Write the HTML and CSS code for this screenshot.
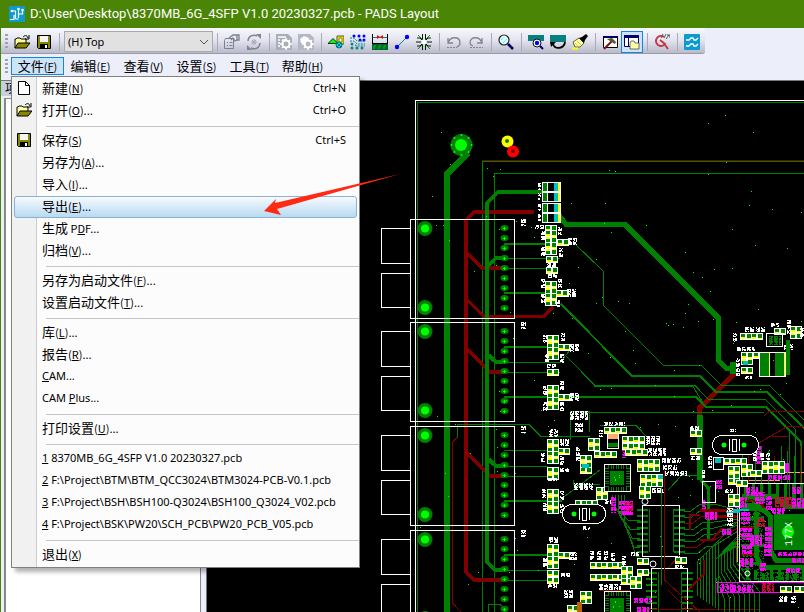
FILE: index.html
```html
<!DOCTYPE html>
<html lang="zh-CN">
<head>
    <meta charset="utf-8">
    <title>PADS Layout</title>
    <link rel="stylesheet" href="styles.css">
</head>
<body>

<header class="titlebar">
    <svg class="logo" viewBox="0 0 16 16"><rect width="16" height="16" fill="#0b9bd0"/><path d="M1 13.500h4V9M3 5h3.500v7.500M9.500 3v9M9.500 8h4V4M6.500 13h3" fill="none" stroke="#fff" stroke-width="1.200"/><circle cx="3" cy="5" r="1.300" fill="#fff"/><circle cx="9.500" cy="3" r="1.300" fill="#fff"/><circle cx="13.500" cy="4" r="1.300" fill="#fff"/></svg>
    <h1>D:\User\Desktop\8370MB_6G_4SFP V1.0 20230327.pcb - PADS Layout</h1>
</header>

<div class="toolbar">
    <span class="grip"></span>
    <button type="button" aria-label="打开"><svg viewBox="0 0 16 16"><use href="#i-open"/></svg></button>
    <button type="button" aria-label="保存"><svg viewBox="0 0 16 16"><use href="#i-save"/></svg></button>
    <span class="sep"></span>
    <div class="layer">
        <select aria-label="Layer"><option>(H) Top</option></select>
        <svg viewBox="0 0 10 6"><path d="M1 1l4 4 4-4" fill="none" stroke="#555"/></svg>
    </div>
    <span class="sep"></span>
    <button type="button" aria-label="特性"><svg viewBox="0 0 16 16"><g fill="none" stroke="#7c8190"><path d="M1.500 4.500h8v10h-9v-8zM3 8.500h1M5.500 8.500h3M3 11.500h1M5.500 11.500h3"/><path d="M5 4l4-3h4v5l-2 1-2-3-2 2M13 1h2v5h-2" stroke-width="1.300"/></g></svg></button>
    <button type="button" aria-label="刷新"><svg viewBox="0 0 16 16"><g fill="none" stroke="#80848f" stroke-width="1.500"><path d="M2 7a6 6 0 0 1 9-5M14 9a6 6 0 0 1-9 5"/><path d="M8 5v6M5 8h6M6 6l4 4M10 6l-4 4" stroke="#a5a8b2" stroke-width="1"/></g><path d="M10 0h5v5zM6 16H1v-5z" fill="#80848f"/></svg></button>
    <span class="sep"></span>
    <button type="button" aria-label="选项"><svg viewBox="0 0 16 16"><path d="M0 0h12l4 4v12H0z" fill="#a9aeb9"/><path d="M2 3h8M2 6h2M6 6h4M2 9h2M2 12h2" stroke="#fff" stroke-width="1.500"/><use href="#i-gear"/></svg></button>
    <button type="button" aria-label="设置"><svg viewBox="0 0 16 16"><path d="M0 0h12l4 4v12H0z" fill="#b4b8c2"/><path d="M2 5l4-3 5 2-3 3v4l-5-2z" fill="#fff"/><use href="#i-gear"/></svg></button>
    <span class="sep"></span>
    <button type="button" aria-label="绘图"><svg viewBox="0 0 16 16"><path d="M9 2h7v8H9z" fill="#ee0" stroke="#554"/><path d="M11 4h3v4h-3z" fill="#fff" stroke="#880"/><path d="M0 9.500l5-5 5 5z" fill="#0f0" stroke="#000" stroke-width=".8"/><circle cx="11" cy="11" r="3" fill="#0ee" stroke="#067"/><path d="M9 9l4 4M13 9l-4 4" stroke="#067"/></svg></button>
    <button type="button" aria-label="设计"><svg viewBox="0 0 16 16"><g fill="#00f"><circle cx="4" cy="2" r="1.500"/><circle cx="9" cy="2" r="1.500"/><circle cx="14" cy="2" r="1.500"/><circle cx="10" cy="6" r="1.500"/><circle cx="14" cy="6" r="1.500"/></g><g fill="#088"><circle cx="2" cy="10" r="1.500"/><circle cx="2" cy="14" r="1.500"/><circle cx="7" cy="14" r="1.500"/><circle cx="12" cy="14" r="1.500"/></g><path d="M0 4h4l3 3h8M0 7h4l3 3h8M5 11l2 1h8" fill="none" stroke="#088" stroke-dasharray="2 1"/></svg></button>
    <button type="button" aria-label="标注"><svg viewBox="0 0 16 16"><path d="M.5 0v16M15.500 0v11" stroke="#000"/><path d="M1 3.500h14" stroke="#088"/><path d="M5 1v4l3-2zM11 1v4L8 3z" fill="#e00"/><path d="M0 9h16v7H0z" fill="#063"/><path d="M0 9.500h16" stroke="#000"/><path d="M2 15v-3h2M7 15v-3h2M12 15v-3h2" fill="none" stroke="#0c0"/></svg></button>
    <button type="button" aria-label="布线"><svg viewBox="0 0 16 16"><path d="M3 13L13 3" stroke="#088"/><circle cx="3" cy="13" r="2.200" fill="#00f"/><circle cx="13" cy="3" r="2.200" fill="#00f"/></svg></button>
    <button type="button" aria-label="ECO"><svg viewBox="0 0 16 16"><path d="M6.500 0v6M9.500 0v6M6.500 10v6M9.500 10v6M0 8h5M11 8h5M1 4h3l2 2M15 4h-3l-2 2M1 12h3l2-2M15 12h-3l-2-2" fill="none" stroke="#111"/><path d="M2 1l5 5M14 1L9 6M2 15l5-5M14 15l-5-5" stroke="#090"/><path d="M6 6h4v4H6z" fill="#fff"/></svg></button>
    <span class="sep"></span>
    <button type="button" aria-label="撤消"><svg viewBox="0 0 16 16"><path d="M2 4v5h5M2 9c2-7 12-7 12 0 0 2-1 3-3 4" fill="none" stroke="#80848f" stroke-width="1.300"/><path d="M1 13.500h10" stroke="#80848f" stroke-dasharray="2 1"/></svg></button>
    <button type="button" aria-label="重做"><svg viewBox="0 0 16 16"><path d="M14 4v5H9M14 9C12 2 2 2 2 9c0 2 1 2 3 3" fill="none" stroke="#80848f" stroke-width="1.300"/><path d="M2 13.500h13" stroke="#80848f" stroke-dasharray="2 1"/></svg></button>
    <span class="sep"></span>
    <button type="button" aria-label="缩放"><svg viewBox="0 0 16 16"><circle cx="6" cy="6" r="5" fill="#dff" stroke="#222" stroke-width="1.200"/><path d="M3 6l3-3M5 9l4-4" stroke="#0dd" stroke-dasharray="1 1"/><path d="M10 10l5 5" stroke="#006" stroke-width="2.500"/></svg></button>
    <span class="sep"></span>
    <button type="button" aria-label="查看"><svg viewBox="0 0 16 16"><path d="M0 1h16v6H0z" fill="#088080"/><circle cx="9" cy="9" r="4" fill="#fff" stroke="#111"/><circle cx="9" cy="9" r="2.200" fill="#00f"/><path d="M12 12l3 3" stroke="#006" stroke-width="2"/></svg></button>
    <button type="button" aria-label="重画"><svg viewBox="0 0 16 16"><path d="M0 1h16v7H0z" fill="#088080"/><path d="M3 10c2 6 11 5 12-2" fill="none" stroke="#000" stroke-width="1.800"/><path d="M0 8h6l-5 5z"/></svg></button>
    <button type="button" aria-label="高亮"><svg viewBox="0 0 16 16"><path d="M1 8l6-4 5 5-4 4H3z" fill="#ffa" stroke="#222" stroke-width=".7"/><path d="M3 9l3 3M5 7l4 4" stroke="#dd0"/><path d="M7 4l3-1 4-3 2 2-3 4-1 3z"/><path d="M0 14.500h6" stroke="#ff0" stroke-width="2"/></svg></button>
    <span class="sep"></span>
    <button type="button" aria-label="工具箱"><svg viewBox="0 0 16 16"><path d="M1.500 2.500h14v11h-14z" fill="#fff" stroke="#000"/><path d="M1 2h15v2H1z" fill="#006"/><path d="M2 15l8-8" stroke="#711" stroke-width="2"/><path d="M5 5l5-1 4 4-1 2-5-3z" fill="#553"/></svg></button>
    <button type="button" class="pressed" aria-label="项目浏览器"><svg viewBox="0 0 16 16"><path d="M.5 1.500h14v11H.5z" fill="#fff" stroke="#006"/><path d="M0 1h15v3H0zM4 3h1v9H4z" fill="#006"/><path d="M6 9l1-2h3l1 2h4v6H6z" fill="#ffa" stroke="#333" stroke-width=".7"/></svg></button>
    <span class="sep"></span>
    <button type="button" aria-label="取消"><svg viewBox="0 0 16 16"><path d="M10 3a5 5 0 1 0 1 7L6 6M9 8l5 7" fill="none" stroke="#c33b49" stroke-width="2"/><path d="M7 4l2-4M10 4l2-4M12 5l3-4M13 1h3v3" fill="none" stroke="#555"/></svg></button>
    <span class="sep"></span>
    <button type="button" aria-label="布线器"><svg viewBox="0 0 16 16"><rect width="16" height="16" rx="1" fill="#0b9bd0"/><path d="M2 6h3l2-2h2l1 2h2l2-2M2 12h3l2-2h2l1 2h2l2-2" fill="none" stroke="#fff" stroke-width="1.300"/></svg></button>
</div>

<nav class="menubar">
    <span class="grip"></span>
    <button type="button" class="active">文件<small>(<u>F</u>)</small></button>
    <button type="button">编辑<small>(<u>E</u>)</small></button>
    <button type="button">查看<small>(<u>V</u>)</small></button>
    <button type="button">设置<small>(<u>S</u>)</small></button>
    <button type="button">工具<small>(<u>T</u>)</small></button>
    <button type="button">帮助<small>(<u>H</u>)</small></button>
</nav>

<main class="work">
    <aside class="explorer">
        <h2>项</h2>
        <div class="tree"></div>
    </aside>
    <div class="board">
        <svg id="board" viewBox="207 81 597 531" preserveAspectRatio="xMinYMin slice"></svg>
    </div>
</main>

<div class="menu" role="menu">
    <button type="button"><svg viewBox="0 0 16 16"><path d="M2.500 1.500h7l4 4v9h-11z" fill="#fff" stroke="#000"/><path d="M9.500 1.500v4h4" fill="none" stroke="#000"/></svg><span>新建<small>(<u>N</u>)</small></span><kbd>Ctrl+N</kbd></button>
    <button type="button"><svg viewBox="0 0 16 16"><use href="#i-open"/></svg><span>打开<small>(<u>O</u>)...</small></span><kbd>Ctrl+O</kbd></button>
    <hr>
    <button type="button"><svg viewBox="0 0 16 16"><use href="#i-save"/></svg><span>保存<small>(<u>S</u>)</small></span><kbd>Ctrl+S</kbd></button>
    <button type="button"><span>另存为<small>(<u>A</u>)...</small></span></button>
    <button type="button"><span>导入<small>(<u>I</u>)...</small></span></button>
    <button type="button" class="selected"><span>导出<small>(<u>E</u>)...</small></span></button>
    <button type="button"><span>生成<small> P<u>D</u>F...</small></span></button>
    <button type="button"><span>归档<small>(<u>V</u>)...</small></span></button>
    <hr>
    <button type="button"><span>另存为启动文件<small>(<u>F</u>)...</small></span></button>
    <button type="button"><span>设置启动文件<small>(<u>T</u>)...</small></span></button>
    <hr>
    <button type="button"><span>库<small>(<u>L</u>)...</small></span></button>
    <button type="button"><span>报告<small>(<u>R</u>)...</small></span></button>
    <button type="button"><span class="latin"><u>C</u>AM...</span></button>
    <button type="button"><span class="latin">CAM <u>P</u>lus...</span></button>
    <hr>
    <button type="button"><span>打印设置<small>(<u>U</u>)...</small></span></button>
    <hr>
    <button type="button"><span class="latin"><u>1</u> 8370MB_6G_4SFP V1.0 20230327.pcb</span></button>
    <button type="button"><span class="latin"><u>2</u> F:\Project\BTM\BTM_QCC3024\BTM3024-PCB-V0.1.pcb</span></button>
    <button type="button"><span class="latin"><u>3</u> F:\Project\BSH\BSH100-Q3024\BSH100_Q3024_V02.pcb</span></button>
    <button type="button"><span class="latin"><u>4</u> F:\Project\BSK\PW20\SCH_PCB\PW20_PCB_V05.pcb</span></button>
    <hr>
    <button type="button"><span>退出<small>(<u>X</u>)</small></span></button>
</div>

<svg class="arrow" viewBox="0 0 136 41"><path d="M0 37L12 25l-1 4L136 0 13 35l4 6z" fill="#ff2a14"/></svg>

<svg class="defs">
    <defs>
        <g id="i-open"><path d="M1 14V5h1l1-1h3l1 1h5v4" fill="#ff9" stroke="#000"/><path d="M1 14l3-5h12l-4 5z" fill="#880" stroke="#000"/><path d="M9 3c2-2 4-2 5 1M15 1v4h-4" fill="none" stroke="#000"/></g>
        <g id="i-save"><path d="M1.500 1.500h13v13h-12l-1-1z" fill="#880" stroke="#000"/><path d="M4 2h8v6H4z" fill="#f4f4f4"/><path d="M4 10h8v5H4z"/><path d="M9 11h2v3H9z" fill="#fff"/></g>
        <g id="i-gear"><circle cx="10" cy="10" r="3.500" fill="none" stroke="#fff" stroke-width="2"/><path d="M10 4v3M10 13v3M4 10h3M13 10h3M6 6l2 2M12 12l2 2M14 6l-2 2M8 12l-2 2" stroke="#fff" stroke-width="1.500"/></g>
    </defs>
</svg>

<script src="board.js"></script>
</body>
</html>
```
FILE: styles.css
```css
* {
  box-sizing: border-box;
}
body {
  margin: 0;
  height: 100vh;
  display: flex;
  flex-direction: column;
  overflow: hidden;
  position: relative;
  border-left: 1px solid #4a8505;
  background: #eceefa;
  color: #000;
  font-family: "Noto Sans CJK SC", sans-serif;
  font-size: 12px;
}
button {
  font: inherit;
  color: inherit;
  background: none;
  border: 0;
  margin: 0;
  padding: 0;
}
.titlebar {
  height: 28px;
  flex: none;
  display: flex;
  align-items: center;
  gap: 5px;
  padding-left: 8px;
  background: #4a8505;
  color: #fff;
}
.titlebar h1 {
  margin: 0;
  font-family: Roboto, sans-serif;
  font-size: 13px;
  line-height: 16px;
  font-weight: normal;
  white-space: pre;
}
.logo {
  width: 16px;
  height: 16px;
}

/* toolbar */
.toolbar {
  height: 26px;
  flex: none;
  align-self: flex-start;
  display: flex;
  align-items: center;
  padding: 2px 2px 0 4px;
  background: linear-gradient(#f8f9fd, #e2e3ee 50%, #babbca);
  border-bottom: 1px solid #9a9aa8;
  border-radius: 0 3px 3px 0;
}
.toolbar button {
  width: 22px;
  height: 22px;
  display: flex;
  align-items: center;
  justify-content: center;
}
.toolbar button svg {
  width: 16px;
  height: 16px;
}
.toolbar .pressed {
  background: #cce4f7;
  border: 1px solid #1883d7;
}
.grip {
  width: 3px;
  height: 15px;
  margin-right: 3px;
  background: repeating-linear-gradient(#a0a1ae 0 2px, transparent 2px 4px);
}
.sep {
  width: 8px;
  height: 18px;
  background: linear-gradient(#a9aab8, #a9aab8) 4px 0 / 1px 100% no-repeat;
}
.layer {
  position: relative;
  width: 149px;
  margin-left: 1px;
}
.layer select {
  display: block;
  appearance: none;
  width: 100%;
  height: 21px;
  padding: 0 3px;
  border: 1px solid #aaa;
  border-radius: 0;
  background: #e1e1e1;
  color: #000;
  font-family: "Noto Sans", sans-serif;
  font-size: 11px;
}
.layer svg {
  position: absolute;
  right: 4px;
  top: 8px;
  width: 10px;
  height: 6px;
}

/* menu bar */
.menubar {
  height: 27px;
  flex: none;
  display: flex;
  align-items: center;
  padding: 0 0 2px 4px;
  border-bottom: 1px solid #777;
}
.menubar button {
  width: 53px;
  height: 18px;
  line-height: 16px;
  font-size: 13px;
  border: 1px solid transparent;
  white-space: nowrap;
}
.menubar .active {
  background: #cce4f7;
  border-color: #1883d7;
}
small {
  font-size: 11px;
}

/* work area */
.work {
  flex: 1;
  min-height: 0;
  display: flex;
}
.explorer {
  width: 206px;
  flex: none;
  display: flex;
  flex-direction: column;
  padding-right: 5px;
  background: #eceefa;
  border-right: 1px solid #777;
}
.explorer h2 {
  margin: 0;
  height: 15px;
  padding-left: 4px;
  font-size: 12px;
  line-height: 14px;
  font-weight: normal;
  background: #c3d0e0;
}
.tree {
  flex: 1;
  margin: 2px 0 0 3px;
  background: #fff;
  border: 1px solid #888;
  border-left-width: 2px;
  border-bottom: 0;
}
.board {
  flex: 1;
  min-width: 0;
  background: #000;
}
.board svg {
  display: block;
  width: 100%;
  height: 100%;
}

/* file menu */
.menu {
  position: absolute;
  left: 10px;
  top: 76px;
  width: 349px;
  padding: 1px 0;
  display: flex;
  flex-direction: column;
  background: linear-gradient(90deg, #f1f1f1 24px, #ccc 24px 25px, #fcfcfc 25px);
  border: 1px solid #808080;
  box-shadow: 4px 4px 4px rgba(0, 0, 0, 0.3);
}
.menu button {
  height: 22px;
  margin: 0 2px;
  padding: 0 10px 2px 1px;
  display: flex;
  align-items: center;
  font-size: 13px;
  line-height: 18px;
  text-align: left;
  white-space: pre;
  border: 1px solid transparent;
  border-radius: 3px;
}
.menu button svg {
  width: 16px;
  height: 16px;
  margin-right: 10px;
}
.menu button span:first-child {
  margin-left: 26px;
}
.menu .latin,
.menu kbd {
  font-family: "Noto Sans", sans-serif;
  font-size: 11px;
}
.menu kbd {
  margin-left: auto;
}
.menu .selected {
  background: linear-gradient(#f6fafd, #d8eaf8 50%, #b8daf2);
  border-color: #8db2cf;
}
.menu hr {
  width: 313px;
  height: 1px;
  margin: 4px 0 3px 34px;
  border: 0;
  background: #c6c6c6;
}
.arrow {
  position: absolute;
  left: 263px;
  top: 174px;
  width: 136px;
  height: 41px;
}
.defs {
  position: absolute;
  width: 0;
  height: 0;
}

/* circuit board */
#board path,
#board rect {
  shape-rendering: crispEdges;
}
.chip-name {
  font-family: "Liberation Mono", monospace;
  font-size: 10px;
  fill: #fff;
}
```
FILE: board.js
```js
const svg = document.getElementById("board");
const GREEN = "#008000", RED = "#800000", LIME = "#00ff00", PINK = "#ff00ff", YELLOW = "#ffff00";
let out = "";
let seed = 7;

function rnd() {
  seed = (seed * 16807) % 2147483647;
  return seed / 2147483647;
}
function line(d, color, width = 1) {
  out += `<path d="${d}" fill="none" stroke="${color}" stroke-width="${width}"/>`;
}
function box(x, y, w, h, color) {
  out += `<rect x="${x}" y="${y}" width="${w}" height="${h}" fill="${color}"/>`;
}
function frame(x, y, w, h, color = "#fff", r = 0) {
  out += `<rect x="${x + 0.5}" y="${y + 0.5}" width="${w}" height="${h}" rx="${r}" fill="none" stroke="${color}"/>`;
}
function dot(x, y, r, color) {
  out += `<circle cx="${x}" cy="${y}" r="${r}" fill="${color}"/>`;
}
// tiny silkscreen marks, too small to read at this zoom
function silk(x, y, w, h, color = "#fff", density = 0.78) {
  let d = "";
  for (let j = 0; j < h; j++) {
    for (let i = 0; i < w; i++) {
      if (rnd() < density && !(w > h ? i % 5 == 4 : j % 5 == 4)) d += `M${x + i} ${y + j}h1v1h-1z`;
    }
  }
  out += `<path d="${d}" fill="${color}"/>`;
}
// rows of small two-pad parts
function parts(x, y, cols, rows, accent = YELLOW) {
  box(x, y, cols * 11 + 1, rows * 6 + 1, "#fff");
  for (let r = 0; r < rows; r++) {
    for (let c = 0; c < cols; c++) {
      let px = x + 1 + c * 11, py = y + 1 + r * 6;
      box(px, py, 4, 5, GREEN);
      box(px + 6, py, 4, 5, GREEN);
      box(px, py + (r % 2 ? 0 : 3), 4, 2, accent);
      box(px + 6, py + (r % 2 ? 0 : 4), 4, 1, accent);
    }
  }
}

// board edge and long traces
line("M482.500 612V161.500H804M494.500 612V173.500H804M417.500 612V102.500H804", GREEN);
line("M482 160.500H804", RED);
line("M468 153L447 174V612", GREEN, 6);
line("M534 212H474L466 220V572L474 580H504M466 252L482 268H504M466 348L490 372H504M466 452L490 476H504", RED, 4);
line("M466 299L484 316H544L553 307", RED, 3);
line("M546 192H498L487 203V562L495 570H504M487 267L496 258H504M487 354L496 362H504M487 458L496 466H504", GREEN, 4);
line("M457.500 437V424.500H529L541 436.500H590M488 612V604.500H500L504 608", GREEN);
line("M457.500 437L452.500 442V603L461 612", RED);
line("M558 214L566 224.500H625L718.500 318V360L726 368H736", GREEN, 5);
line("M736 372L699.500 408V424", RED, 5);
line("M699.500 415V480", GREEN, 6);
line("M699.500 478L708 488V540", GREEN, 3);

for (let y of [244, 293, 347, 397, 501, 555]) line(`M504 ${y}H562`, GREEN, 2);
line("M504 258.500H560M504 268.500H548M504 362.500H560L570 350M504 372.500H560M504 450.500H560M504 466.500H548M504 476.500H548M504 570.500H560M504 580.500H548", GREEN);
line("M574 243L603 271V305L663 365H701L721 385H769L804 420", GREEN);
line("M561 304L632 376H700L716 392H767L804 428", GREEN, 2);
line("M564 354L595 385.500H695L708 399H765L795 429V500", GREEN);
line("M594 386.500H693L705 406H765L789 431V500", GREEN);
line("M564 397H696L706 407H766L801 442V500", GREEN, 2);
line("M580 412.500H764", GREEN);
line("M764 416L769 411.500H804M740 454L788 426H804M772 436.500H788", RED);
line("M570 440V411.500H589V432M600 425.500H636L650 440M573 480V484.500H600M560 500L600 470", GREEN);

// SFP cages
for (let top of [219, 322, 426, 530]) {
  frame(410, top, 104, 99);
  frame(381, top + 9, 29, 35);
  frame(381, top + 54, 29, 34);
  for (let y of [top + 9, top + 88]) {
    dot(425, y + 0.5, 7.5, GREEN);
    dot(425, y + 0.5, 4, LIME);
  }
  for (let i = 0; i < 9; i++) {
    let y = top + 9 + i * 10;
    out += `<ellipse cx="504.5" cy="${y}" rx="4" ry="3" fill="${GREEN}"/>`;
    box(504, y - 1, 1, 3, LIME);
    box(503, y, 3, 1, LIME);
  }
  silk(521, top, 5, 7);
}
line("M415.500 612V100.500H804", "#fff");

// mounting hole and test pads
dot(461.5, 145, 11, GREEN);
dot(461, 145, 6, LIME);
for (let a = 0; a < 8; a++) {
  dot(461.5 + 10 * Math.cos(a * Math.PI / 4), 145 + 10 * Math.sin(a * Math.PI / 4), 1, LIME);
}
dot(507.5, 141.5, 6, YELLOW);
dot(507, 141, 2, GREEN);
dot(513, 151.5, 6, "#f00");
dot(513, 151, 2, RED);

// vias
for (let i = 0; i < 190; i++) {
  let x = 420 + Math.floor(rnd() * 384), y = 110 + Math.floor(rnd() * 500);
  if (y > 200 || i % 3 == 0) box(x, y, 1, 1, LIME);
}

// large fuses
for (let y of [182, 192, 203, 213]) {
  box(542, y, 19, 10, "#fff");
  box(543, y + 1, 4, 8, GREEN);
  box(548, y + 1, 6, 8, "#000");
  box(554, y + 1, 4, 8, "#00c0c0");
  box(558, y + 1, 2, 8, YELLOW);
  silk(538, y + 1, 3, 7);
}

// SO packages with their leads
for (let [x, y, w, h] of [[642, 505, 37, 51], [651, 568, 36, 50]]) {
  for (let i = 0; i < 8; i++) {
    line(`M${x - 5} ${y + 5 + i * 6}H${x + 6}M${x + w - 5} ${y + 5 + i * 6}H${x + w + 6}`, GREEN, 2);
  }
  line(`M${x + 7.5} ${y + 4}V${y + h - 4}M${x + w - 5.5} ${y + 4}V${y + h - 4}`, GREEN);
  frame(x, y, w, h);
}
out += `<circle cx="645" cy="501.5" r="3" fill="none" stroke="#fff"/><circle cx="653" cy="564" r="3" fill="none" stroke="#fff"/>`;
line("M664.500 470V580L700 612M680 555L668 568M668 590L690 612M640 609.500H760M630 590H600", RED);
line("M661.500 478V585M668 490L682 475H700", GREEN);
for (let i = 0; i < 5; i++) {
  line(`M${612 + i * 3} 495V${504 + i * 4}L${628 + i * 2} ${520 + i * 9}H640`, GREEN);
}

// fan-out between the packages and the main chip
for (let i = 0; i < 8; i++) {
  line(`M684 ${511 + i * 6}H${691 + i}L${700 + i} ${504 + i * 6}H714L738 ${510 + i * 3}`, i % 4 == 2 ? RED : GREEN);
  line(`M${697 + i * 3} ${596 + i * 2}V${562 - i * 3}L${735 + i} ${524 - i}`, GREEN);
  line(`M${724 + i * 5} 612V${598 - i}L${715 + i * 3} ${576 - i * 2}V${560 - i * 2}L740 ${534 + i * 2}`, GREEN);
}
line("M690 530V515H700M700 540H712L722 528M688 590L704 574V560", RED, 2);

// main BGA
for (let i = 0; i < 8; i++) {
  line(`M${745 + i * 8} 484V${500 + i % 3 * 3}M${747 + i * 8} 580V${566 + i % 3 * 4}`, GREEN, 3);
  line(`M741 ${500 + i * 9}H${756 + i % 3 * 4}`, i % 3 ? GREEN : RED, 3);
}
line("M742 505H758L770 516V550L776 560H804M756 512V556L762 567H804M742 496H775L785 506H804", GREEN, 5);
line("M745 500H758L764 508M700 510H740M706 516H736", RED, 3);
line("M780 480H737V562M746 472H804", "#ffa080");
for (let i = 0; i < 10; i++) {
  line(`M${742 + i * 6.5} ${446 + i % 3 * 5}V484`, i % 4 == 1 ? RED : GREEN);
}
silk(742, 498, 22, 72, GREEN, 0.3);
silk(755, 572, 49, 9, GREEN, 0.6);
const pink = [
  [622, 447, 4, 11], [611, 497, 5, 16], [619, 501, 14, 14], [702, 500, 4, 10], [705, 512, 12, 8], [716, 480, 6, 10],
  [722, 529, 10, 6], [735, 497, 12, 11], [746, 487, 12, 9], [755, 492, 10, 12], [768, 475, 22, 5], [780, 463, 10, 9], [766, 496, 6, 15], [772, 508, 13, 6], [792, 498, 12, 10],
  [741, 512, 9, 12], [740, 528, 12, 12], [750, 535, 12, 11], [742, 545, 10, 10], [740, 558, 13, 9], [765, 527, 7, 16], [764, 544, 8, 12], [760, 563, 6, 8], [778, 552, 26, 4], [792, 558, 12, 5], [786, 568, 14, 5],
  [720, 584, 12, 9], [732, 585, 21, 8], [756, 446, 5, 18], [777, 463, 12, 8], [792, 487, 9, 7], [634, 598, 18, 5], [637, 607, 12, 5]
];
for (let p of pink) silk(...p, PINK, 0.85);
silk(775, 497, 17, 10, "#e00040", 0.8);
silk(762, 583, 12, 9, "#e00040", 0.7);
silk(625, 502, 8, 9, "#e00040", 0.6);
silk(757, 518, 8, 10, "#e00040", 0.7);
frame(717, 582, 90, 10, PINK);
frame(739, 483, 70, 98);
frame(702, 481, 13, 21);
frame(713, 457, 10, 12);
box(715, 458, 6, 5, "#00c0c0");
line("M733 510H749M726 512H740", "#00c0c0", 2);
box(774, 514, 30, 36, GREEN);
dot(788, 532, 6, LIME);
out += `<text class="chip-name" transform="translate(792 546) rotate(-90)">177X</text>`;
out += `<circle cx="747.5" cy="573.5" r="2.5" fill="none" stroke="#fff"/>`;

const groups = [
  [545, 225, 1, 1], [545, 230, 1, 4], [557, 239, 1, 1], [546, 256, 1, 1], [546, 267, 1, 1], [545, 281, 1, 4], [556, 290, 1, 1],
  [547, 335, 1, 4], [558, 344, 1, 1], [547, 369, 1, 1], [547, 385, 1, 4], [558, 394, 1, 1],
  [547, 439, 1, 4], [558, 448, 1, 1], [547, 467, 1, 2], [547, 489, 1, 4],
  [547, 544, 1, 4], [558, 552, 1, 1], [547, 570, 1, 1], [547, 577, 1, 1],
  [604, 427, 2, 1], [588, 438, 1, 2], [594, 451, 2, 1], [622, 436, 2, 1], [622, 443, 2, 1], [625, 449, 2, 1], [580, 455, 1, 3], [637, 459, 2, 2], [640, 474, 2, 2], [639, 486, 1, 2],
  [596, 487, 1, 2], [575, 500, 2, 1], [637, 558, 1, 1], [675, 557, 1, 1], [590, 562, 3, 1], [590, 574, 3, 1], [621, 566, 1, 3], [630, 576, 1, 2], [637, 569, 1, 1], [580, 591, 1, 2], [567, 605, 1, 1],
  [740, 333, 2, 1], [774, 328, 1, 1], [741, 352, 1, 2], [753, 352, 1, 1], [741, 367, 1, 1], [790, 326, 1, 2],
  [690, 430, 1, 1], [690, 448, 1, 1], [724, 458, 2, 1], [728, 466, 1, 3], [741, 464, 1, 2], [728, 494, 1, 2], [762, 461, 2, 2], [750, 470, 1, 1], [736, 480, 1, 1], [780, 586, 1, 1], [794, 586, 1, 1]
];
for (let g of groups) parts(...g);

const marks = [
  [535, 225, 9, 4], [541, 231, 4, 10], [541, 247, 4, 9], [558, 227, 4, 8], [559, 248, 4, 9], [568, 238, 9, 7], [547, 263, 9, 4], [548, 274, 9, 4], [541, 279, 4, 10], [541, 294, 4, 10], [558, 279, 4, 9], [567, 289, 9, 8], [555, 300, 5, 7],
  [543, 335, 4, 8], [561, 333, 4, 8], [570, 344, 9, 8], [545, 354, 4, 8], [560, 354, 4, 10], [547, 364, 9, 4], [543, 386, 4, 9], [560, 381, 4, 9], [570, 393, 9, 8], [543, 402, 4, 9], [560, 402, 4, 10],
  [570, 411, 18, 9], [575, 423, 8, 9], [549, 429, 9, 8], [560, 439, 9, 7], [541, 453, 4, 9], [560, 456, 4, 9], [560, 468, 9, 4], [548, 478, 9, 3], [542, 489, 4, 9], [560, 491, 4, 10], [560, 504, 4, 9], [543, 503, 4, 8],
  [549, 537, 9, 6], [569, 552, 8, 8], [543, 558, 4, 9], [548, 584, 9, 4], [561, 573, 9, 4], [576, 447, 4, 14], [604, 422, 21, 4], [599, 430, 4, 7], [646, 436, 15, 9], [648, 448, 18, 8], [662, 458, 20, 5], [665, 471, 22, 5], [663, 465, 14, 5], [652, 488, 12, 5], [574, 483, 20, 7], [605, 500, 6, 4], [583, 526, 7, 4],
  [590, 551, 4, 9], [597, 551, 4, 9], [604, 551, 4, 9], [611, 553, 4, 8], [631, 552, 8, 4], [622, 556, 4, 9], [675, 565, 9, 4], [599, 584, 22, 6], [564, 590, 9, 8],
  [733, 333, 4, 9], [745, 327, 9, 5], [756, 327, 9, 5], [771, 323, 8, 4], [787, 320, 4, 14], [800, 328, 4, 10], [784, 344, 9, 6], [737, 347, 18, 4], [736, 358, 4, 18], [745, 376, 7, 3],
  [690, 426, 9, 4], [691, 456, 9, 4], [702, 470, 3, 8], [730, 429, 6, 3], [708, 456, 4, 12], [725, 489, 8, 4], [727, 508, 6, 18], [753, 452, 4, 9], [760, 453, 4, 7], [766, 453, 4, 7], [779, 596, 8, 6], [791, 596, 5, 7]
];
for (let m of marks) silk(...m);

// power inductor
frame(759, 352, 26, 24);
box(760, 353, 9, 23, GREEN);
box(769, 353, 1, 23, YELLOW);
box(775, 353, 9, 23, GREEN);
box(784, 353, 1, 23, YELLOW);
line("M788 340V375", GREEN, 4);
frame(766, 333, 16, 13);
silk(769, 336, 12, 9, GREEN);
box(743, 361, 5, 4, "#00c0c0");
box(730, 362, 6, 12, GREEN);
box(608, 434, 10, 5, "#ffb070");
box(608, 443, 10, 4, GREEN);
frame(607, 433, 11, 15);
box(577, 602, 5, 10, "#c06000");
box(582, 464, 7, 4, "#00c0c0");
box(658, 475, 5, 4, "#00c0c0");

// crystals
for (let [x, y, w] of [[562, 504, 43], [712, 435, 46]]) {
  out += `<rect x="${x + 0.5}" y="${y + 0.5}" width="${w}" height="19" rx="9" fill="#000" stroke="#fff"/>`;
  dot(x + 12, y + 10, 2.5, LIME);
  dot(x + 32, y + 10, 2.5, LIME);
  frame(x + 20, y + 4, 4, 12);
  line(`M${x + 17.5} ${y + 4}V${y + 16}M${x + 27.5} ${y + 4}V${y + 16}`, "#fff");
}

// QFN chips
for (let [x, y] of [[604, 464], [604, 591]]) {
  box(x, y, 26, 27, "#000");
  frame(x, y, 26, 27);
  for (let i = 0; i < 8; i++) {
    box(x + 4 + i * 2.5, y + 1, 1, 4, GREEN);
    box(x + 4 + i * 2.5, y + 23, 1, 4, GREEN);
    box(x + 1, y + 4 + i * 2.5, 4, 1, GREEN);
    box(x + 22, y + 4 + i * 2.5, 4, 1, GREEN);
  }
  box(x + 6, y + 7, 14, 14, GREEN);
  silk(x + 9, y + 10, 7, 7, LIME, 0.15);
}

svg.innerHTML = out;
```
